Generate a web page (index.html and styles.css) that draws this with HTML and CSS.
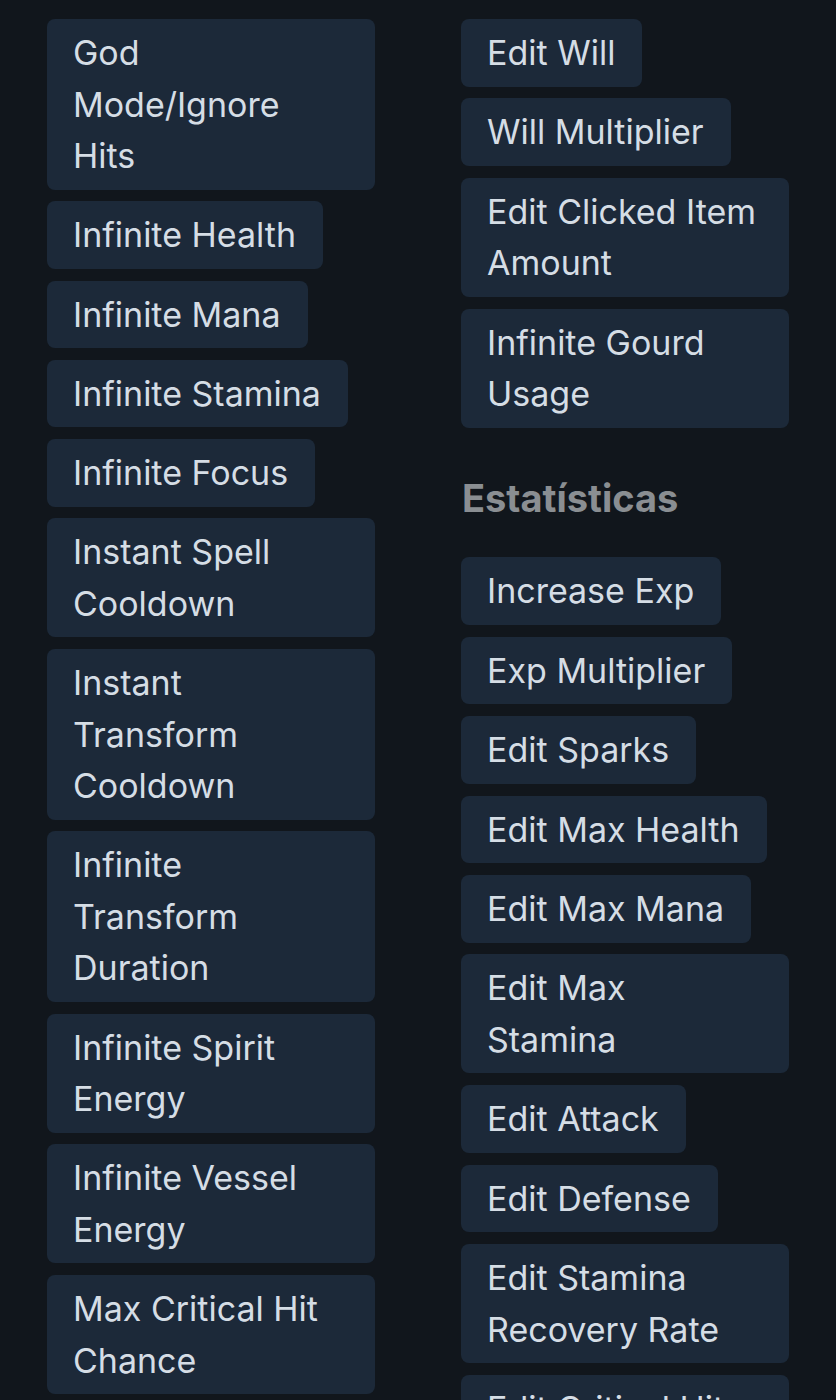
FILE: index.html
```html
<!DOCTYPE html>
<html lang="pt">
<head>
<meta charset="utf-8">
<title>Cheats</title>
<link rel="stylesheet" href="styles.css">
</head>
<body>
<div class="page">
  <div class="col">
    <span class="chip">God Mode/Ignore Hits</span>
    <span class="chip">Infinite Health</span>
    <span class="chip">Infinite Mana</span>
    <span class="chip">Infinite Stamina</span>
    <span class="chip">Infinite Focus</span>
    <span class="chip">Instant Spell Cooldown</span>
    <span class="chip">Instant Transform Cooldown</span>
    <span class="chip">Infinite Transform Duration</span>
    <span class="chip">Infinite Spirit Energy</span>
    <span class="chip">Infinite Vessel Energy</span>
    <span class="chip">Max Critical Hit Chance</span>
  </div>
  <div class="col">
    <span class="chip">Edit Will</span>
    <span class="chip">Will Multiplier</span>
    <span class="chip">Edit Clicked Item Amount</span>
    <span class="chip">Infinite Gourd Usage</span>
    <h2 class="heading">Estatísticas</h2>
    <span class="chip">Increase Exp</span>
    <span class="chip">Exp Multiplier</span>
    <span class="chip">Edit Sparks</span>
    <span class="chip">Edit Max Health</span>
    <span class="chip">Edit Max Mana</span>
    <span class="chip">Edit Max Stamina</span>
    <span class="chip">Edit Attack</span>
    <span class="chip">Edit Defense</span>
    <span class="chip">Edit Stamina Recovery Rate</span>
    <span class="chip">Edit Critical Hit Chance</span>
  </div>
</div>
</body>
</html>
```
FILE: styles.css
```css
html, body {
  margin: 0;
  padding: 0;
  background: #11161c;
}
body {
  font-family: Inter, "Noto Sans", sans-serif;
  color: #d5dde5;
  overflow: hidden;
  height: 1400px;
}
.page {
  display: grid;
  grid-template-columns: 1fr 1fr;
  column-gap: 86px;
  padding: 19px 47px 0;
}
.col {
  display: flex;
  flex-direction: column;
  align-items: flex-start;
  gap: 11.75px;
  min-width: 0;
}
.col + .col {
  gap: 11.9px;
}
.chip {
  display: block;
  max-width: 100%;
  box-sizing: border-box;
  background: #1c2939;
  border-radius: 8px;
  padding: 8px 27px 8px 26px;
  font-size: 34px;
  line-height: 51.5px;
  font-weight: 400;
}
.heading {
  margin: 35px 0 25px 1px;
  font-size: 38px;
  line-height: 46px;
  font-weight: 700;
  color: #8a8e92;
}
```
